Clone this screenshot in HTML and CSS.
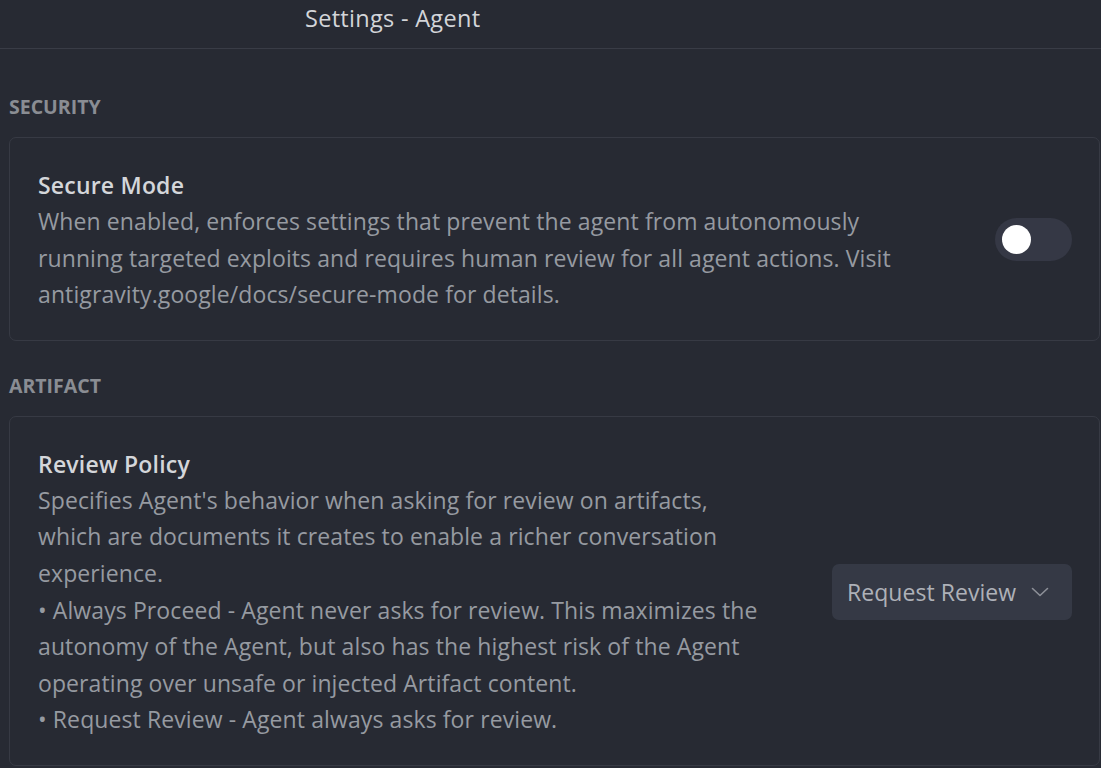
FILE: index.html
```html
<!DOCTYPE html>
<html lang="en">
<head>
<meta charset="utf-8">
<title>Settings - Agent</title>
<link rel="stylesheet" href="styles.css">
</head>
<body>
<header class="titlebar">
  <h1 class="titlebar-title">Settings - Agent</h1>
</header>
<main class="settings">
  <h2 class="section-label">SECURITY</h2>
  <section class="card">
    <div class="card-text">
      <h3 class="card-title">Secure Mode</h3>
      <p class="card-desc">When enabled, enforces settings that prevent the agent from autonomously running targeted exploits and requires human review for all agent actions. Visit antigravity.google/docs/secure-mode for details.</p>
    </div>
    <button class="toggle" type="button" aria-label="Secure Mode"><span class="toggle-knob"></span></button>
  </section>

  <h2 class="section-label section-label-next">ARTIFACT</h2>
  <section class="card">
    <div class="card-text card-text-narrow">
      <h3 class="card-title">Review Policy</h3>
      <p class="card-desc">Specifies Agent's behavior when asking for review on artifacts, which are documents it creates to enable a richer conversation experience.<br>• Always Proceed - Agent never asks for review. This maximizes the autonomy of the Agent, but also has the highest risk of the Agent operating over unsafe or injected Artifact content.<br>• Request Review - Agent always asks for review.</p>
    </div>
    <button class="select" type="button">
      <span class="select-value">Request Review</span>
      <svg class="select-chevron" width="18" height="10" viewBox="0 0 18 10" aria-hidden="true"><path d="M1.5 1.5 L9 8.5 L16.5 1.5" fill="none" stroke="currentColor" stroke-width="1.6" stroke-linecap="round" stroke-linejoin="round"/></svg>
    </button>
  </section>
</main>
</body>
</html>
```

FILE: styles.css
```css
html, body {
  margin: 0;
  padding: 0;
  background: #272a33;
  height: 100%;
  overflow: hidden;
}

body {
  font-family: "Open Sans", "Noto Sans", sans-serif;
  color: #969aa1;
}

.titlebar {
  height: 48px;
  border-bottom: 1px solid #393c46;
  display: flex;
  align-items: center;
  padding-left: 305px;
}

.titlebar-title {
  margin: 0;
  font-size: 23.5px;
  font-weight: 400;
  letter-spacing: 0.3px;
  color: #d3d5d9;
  line-height: 1;
  position: relative;
  top: -5px;
}

.settings {
  padding: 0 1px 0 9px;
}

.section-label {
  margin: 46px 0 18px;
  height: 24px;
  line-height: 24px;
  font-size: 19.5px;
  font-weight: 700;
  color: #8a8d93;
}

.section-label-next {
  margin-top: 33px;
}

.card {
  border: 1px solid #373a44;
  border-radius: 7px;
  padding: 29px 27px 27px 28px;
  display: flex;
  align-items: center;
  gap: 64px;
}

.card-text {
  flex: 1;
  min-width: 0;
}

.card-text-narrow {
  flex: 0 1 728px;
}

.card-title {
  margin: 0;
  font-size: 23px;
  font-weight: 600;
  letter-spacing: 0.2px;
  color: #d4d6da;
  line-height: 36px;
}

.card-desc {
  margin: 0;
  font-size: 23px;
  letter-spacing: 0.1px;
  line-height: 36.6px;
  color: #969aa1;
}

.toggle {
  flex-shrink: 0;
  width: 77px;
  height: 43px;
  border: none;
  border-radius: 22px;
  background: #353845;
  padding: 0 0 0 7px;
  display: flex;
  align-items: center;
  cursor: pointer;
}

.toggle-knob {
  width: 29px;
  height: 29px;
  border-radius: 50%;
  background: #ffffff;
}

.select {
  flex-shrink: 0;
  margin-left: auto;
  width: 240px;
  height: 56px;
  border: none;
  border-radius: 7px;
  background: #353945;
  padding: 0 23px 0 15px;
  display: flex;
  align-items: center;
  justify-content: space-between;
  font-family: inherit;
  font-size: 23px;
  letter-spacing: 0.05px;
  color: #aeb1b8;
  cursor: pointer;
}

.select-chevron {
  color: #8d9098;
}
```
